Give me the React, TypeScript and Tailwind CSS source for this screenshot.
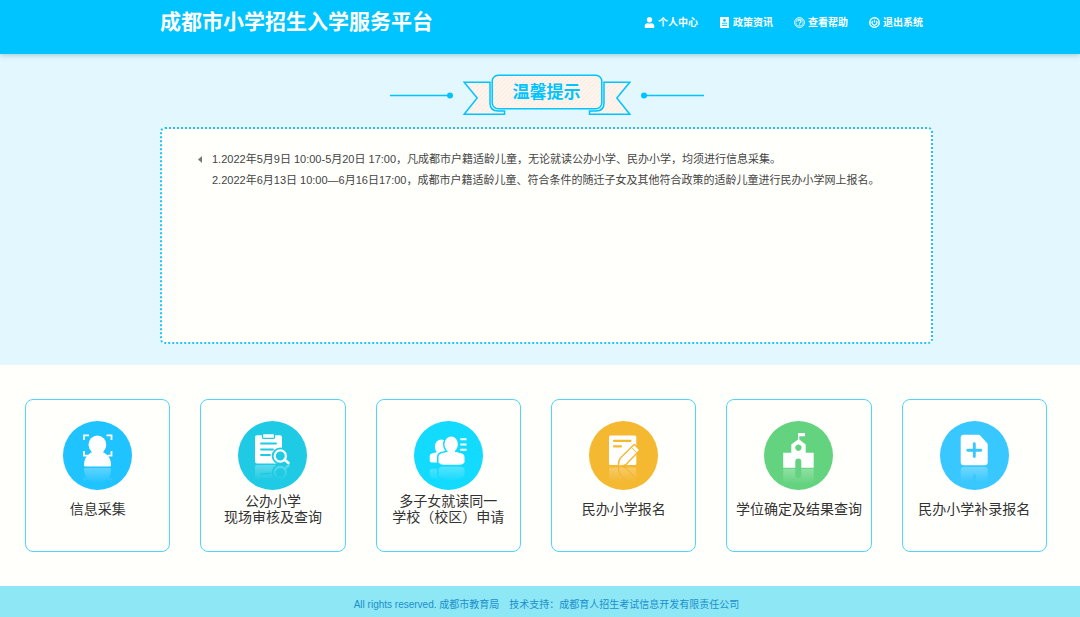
import React, { useId } from 'react';
import { FaUser } from 'react-icons/fa';

interface MenuItem {
  label: string;
  icon: React.ReactNode;
}

interface ServiceItem {
  lines: string[];
  color: string;
  // y position where the reflection starts
  base: number;
  glyph: React.ReactNode;
}

const menus: MenuItem[] = [
  { label: '个人中心', icon: <FaUser className="w-[11px] h-[11px]" /> },
  {
    label: '政策资讯',
    icon: (
      <svg viewBox="0 0 11 11" className="w-[11px] h-[11px]">
        <rect x="1" y="0" width="9" height="11" fill="#fff" />
        <circle cx="5.5" cy="3.4" r="1.4" fill="#00c4ff" />
        <path d="M3 6.2h5M3 8.4h5" stroke="#00c4ff" strokeWidth="1" />
      </svg>
    ),
  },
  {
    label: '查看帮助',
    icon: (
      <svg viewBox="0 0 11 11" className="w-[11px] h-[11px]" fill="none" stroke="#fff">
        <circle cx="5.5" cy="5.5" r="4.9" strokeWidth="1" />
        <circle cx="5.5" cy="5.5" r="3.6" strokeWidth="0.6" />
        <path d="M4 4.4a1.5 1.5 0 1 1 2.2 1.3q-.7.4-.7 1.1M5.5 7.6v1" strokeWidth="1.2" />
      </svg>
    ),
  },
  {
    label: '退出系统',
    icon: (
      <svg viewBox="0 0 11 11" className="w-[11px] h-[11px]" fill="none" stroke="#fff">
        <circle cx="5.5" cy="5.5" r="4.7" strokeWidth="1.5" />
        <path d="M3.7 4a2.4 2.4 0 1 0 3.6 0M5.5 2.8v2.6" strokeWidth="1.2" />
      </svg>
    ),
  },
];

const notices = [
  '1.2022年5月9日 10:00-5月20日 17:00，凡成都市户籍适龄儿童，无论就读公办小学、民办小学，均须进行信息采集。',
  '2.2022年6月13日 10:00—6月16日17:00，成都市户籍适龄儿童、符合条件的随迁子女及其他符合政策的适龄儿童进行民办小学网上报名。',
];

const services: ServiceItem[] = [
  {
    lines: ['信息采集'],
    color: '#1fc3ff',
    base: 46.3,
    glyph: (
      <>
        <path
          d="M21 19v-4.6h5M43.5 14.4h5V19M21 30v4.6h4M48.5 30v4.6h-4"
          fill="none"
          stroke="#fff"
          strokeWidth="1.8"
        />
        <ellipse cx="34.4" cy="23.8" rx="8.9" ry="9.2" fill="#fff" />
        <path
          d="M21 44.5c0-7.5 3.5-11.5 8.5-13.5h10c5 2 8.5 6 8.5 13.5q0 1-1 1H22q-1 0-1-1z"
          fill="#fff"
        />
      </>
    ),
  },
  {
    lines: ['公办小学', '现场审核及查询'],
    color: '#1fcbe4',
    base: 43.3,
    glyph: (
      <>
        <rect x="17" y="14.3" width="27" height="28.2" rx="2" fill="#fff" />
        <rect x="24.5" y="12.6" width="12" height="4.8" rx="1.2" fill="#fff" stroke="#1fcbe4" strokeWidth="1.3" />
        <path d="M23 22.5h15M23 28.5h12M23 34h9" stroke="#1fcbe4" strokeWidth="1.8" strokeLinecap="round" />
        <circle cx="42.3" cy="35" r="8.6" fill="#1fcbe4" />
        <circle cx="42.3" cy="35" r="5.6" fill="none" stroke="#fff" strokeWidth="2.3" />
        <path d="M46.5 38.7l4 3.3" stroke="#fff" strokeWidth="2.6" strokeLinecap="round" />
      </>
    ),
  },
  {
    lines: ['多子女就读同一', '学校（校区）申请'],
    color: '#13daff',
    base: 44.6,
    glyph: (
      <>
        <ellipse cx="27.3" cy="25.8" rx="6.4" ry="7.4" fill="#fff" />
        <path d="M18.700 41.500q-3 0-3-2v-4.500q0-2.500 4-3l3.500-1h8v10.500z" fill="#fff" />
        <g stroke="#13daff" strokeWidth="3" fill="#fff" paintOrder="stroke">
          <path d="M24.500 41.500v-5.500q0-3.500 4.500-4l3.500-1h9.800l3.500 1q4.700.5 4.700 4v5.500q-1.500 2.200-5 2.200h-16q-3.500 0-5-2.200z" />
          <ellipse cx="37.2" cy="23.300" rx="6.7" ry="7.900" />
        </g>
        <path d="M33.500 28.500h7.500v5h-7.500z" fill="#fff" />
        <path d="M46.300 18.300h6.200M46.300 23.500h6.200M46.300 28.700h6.200" stroke="#fff" strokeWidth="2" />
      </>
    ),
  },
  {
    lines: ['民办小学报名'],
    color: '#f4b831',
    base: 45.3,
    glyph: (
      <>
        <rect x="20" y="14.5" width="27.3" height="29.5" rx="1.5" fill="#fff" />
        <path d="M25 19.8h16.5M25 25.3h7" stroke="#f4b831" strokeWidth="2.2" strokeLinecap="round" />
        <path
          d="M30.200 44.200q-.2-4.500 2-7L45.300 24.200l4.600 4.800L37 42.500q-2 2-6.800 1.700z"
          fill="#fff"
          stroke="#f4b831"
          strokeWidth="2.8"
          strokeLinejoin="round"
          paintOrder="stroke"
        />
        <path d="M42.800 26.700l4.700 4.700" stroke="#f4b831" strokeWidth="0.900" />
      </>
    ),
  },
  {
    lines: ['学位确定及结果查询'],
    color: '#64d37f',
    base: 47.2,
    glyph: (
      <path
        fillRule="evenodd"
        fill="#fff"
        d="M34 12h7v3.200h-5.700v3.200l6.400 5.200v8.100h8v15H37.300V40.500a3 3 0 0 0-6 0v6.200H19.200v-15h8.100v-8.100l6.700-5.200zM34.400 23.500a3.200 3.200 0 1 0 .01 0z"
      />
    ),
  },
  {
    lines: ['民办小学补录报名'],
    color: '#38c8ff',
    base: 45.2,
    glyph: (
      <>
        <path
          d="M23.700 13.700h14.800q1 0 1.700.7l6.800 7.600q.7.700.7 1.700v17.600q0 3-3 3h-21q-3 0-3-3v-24.600q0-3 3-3z"
          fill="#fff"
        />
        <path d="M34.300 22.800v12.800M27.800 29.200h13" stroke="#38c8ff" strokeWidth="2.900" strokeLinecap="round" />
      </>
    ),
  },
];

const ServiceIcon = ({ color, base, glyph }: Omit<ServiceItem, 'lines'>) => {
  const id = useId();
  return (
    <svg viewBox="0 0 69 69" className="w-[69px] h-[69px] shrink-0" aria-hidden="true">
      <defs>
        <linearGradient id={`${id}-fade`} x1="0" y1={base} x2="0" y2={base + 16} gradientUnits="userSpaceOnUse">
          <stop offset="0" stopColor="#fff" stopOpacity="0.3" />
          <stop offset="1" stopColor="#fff" stopOpacity="0" />
        </linearGradient>
        <mask id={`${id}-mask`} maskUnits="userSpaceOnUse" x="0" y="0" width="69" height="69">
          <rect x="0" y={base} width="69" height="20" fill={`url(#${id}-fade)`} />
        </mask>
      </defs>
      <circle cx="34.5" cy="34.5" r="34.5" fill={color} />
      <g mask={`url(#${id}-mask)`}>
        <g transform={`translate(0 ${base * 2}) scale(1 -1)`}>{glyph}</g>
      </g>
      {glyph}
    </svg>
  );
};

const RibbonTitle = () => (
  <h2 className="relative flex h-[42px] w-[168px] justify-center">
    <svg viewBox="0 0 168 42" className="absolute inset-0 h-full w-full" aria-hidden="true">
      <defs>
        <pattern id="hatch" width="3" height="3" patternUnits="userSpaceOnUse" patternTransform="rotate(45)">
          <rect width="3" height="3" fill="#fdf6f0" />
          <rect width="1" height="3" fill="#fbeadf" />
        </pattern>
      </defs>
      <g fill="url(#hatch)" stroke="#00c4ff" strokeWidth="1.5">
        <path d="M1.2 8.300H27V29q0 8 8 8h6.500v3.200H1.200L14.200 24z" />
        <path d="M166.800 8.300H141V29q0 8-8 8h-6.500v3.200h40.300L153.800 24z" />
        <rect x="29.200" y="1.200" width="109.600" height="33.600" rx="6" />
      </g>
    </svg>
    <span className="relative h-9 text-[17px] leading-[38px] font-bold text-[#00c4ff]">温馨提示</span>
  </h2>
);

const App = () => {
  return (
    <div className="min-h-screen flex flex-col bg-[#fffffc] font-['Liberation_Sans','Noto_Sans_CJK_SC',sans-serif]">
      {/* Header */}
      <header className="relative bg-[#00c4ff] pl-[13px] pb-[10px] text-white shadow-[0_1px_5px_rgba(0,90,110,0.3)]">
        <div className="mx-auto flex h-11 max-w-[773px] items-center justify-between pr-[10px]">
          <h1 className="text-[21px] font-bold">成都市小学招生入学服务平台</h1>
          <nav className="flex gap-[21px]">
            {menus.map((menu) => (
              <a key={menu.label} href="#" className="flex items-center gap-[3px] text-[10px] font-bold">
                {menu.icon}
                {menu.label}
              </a>
            ))}
          </nav>
        </div>
      </header>

      {/* Notice */}
      <section className="bg-[#e2f7fe] pt-5 pb-[21px] pl-[13px]">
        <div className="flex items-center justify-center gap-[10px]">
          <svg viewBox="0 0 63 8" className="w-[63px] h-2" aria-hidden="true">
            <path d="M0 4.5h60" stroke="#00c4ff" strokeWidth="1.5" />
            <circle cx="60" cy="4.5" r="3" fill="#00c4ff" />
          </svg>
          <RibbonTitle />
          <svg viewBox="0 0 63 8" className="w-[63px] h-2" aria-hidden="true">
            <path d="M3 4.5h60" stroke="#00c4ff" strokeWidth="1.5" />
            <circle cx="3" cy="4.5" r="3" fill="#00c4ff" />
          </svg>
        </div>

        <div className="mx-auto mt-[11px] flex min-h-[217px] max-w-[773px] gap-[10px] rounded-[5px] border-2 border-dotted border-[#1cc4fb] bg-[#fffffc] pt-5 pr-4 pl-9">
          <svg viewBox="0 0 4 21" className="w-1 h-[21px] shrink-0" aria-hidden="true">
            <path d="M4 7v7L0 10.5z" fill="#777" />
          </svg>
          <div className="text-[11px] leading-[21px] text-[#444]">
            {notices.map((notice) => (
              <p key={notice}>{notice}</p>
            ))}
          </div>
        </div>
      </section>

      {/* Services */}
      <main className="grid grow grid-cols-6 content-start gap-[30px] pt-[34px] pr-[33px] pb-[34px] pl-[25px]">
        {services.map((service) => (
          <a
            key={service.lines[0]}
            href="#"
            className="flex min-h-[153px] flex-col items-center rounded-lg border border-[#4fd4fa] pt-[21px]"
          >
            <ServiceIcon color={service.color} base={service.base} glyph={service.glyph} />
            <span className="flex h-[38px] flex-col justify-center text-center text-[14px] leading-4 whitespace-nowrap text-[#333]">
              {service.lines.map((line) => (
                <span key={line}>{line}</span>
              ))}
            </span>
          </a>
        ))}
      </main>

      {/* Footer */}
      <footer className="flex h-[31px] items-center justify-center gap-[10px] bg-[#8ee7f5] pt-[6px] pl-[13px] text-[10px] text-[#1a8fcc]">
        <span>All rights reserved. 成都市教育局</span>
        <span>技术支持：成都育人招生考试信息开发有限责任公司</span>
      </footer>
    </div>
  );
};

export default App;
